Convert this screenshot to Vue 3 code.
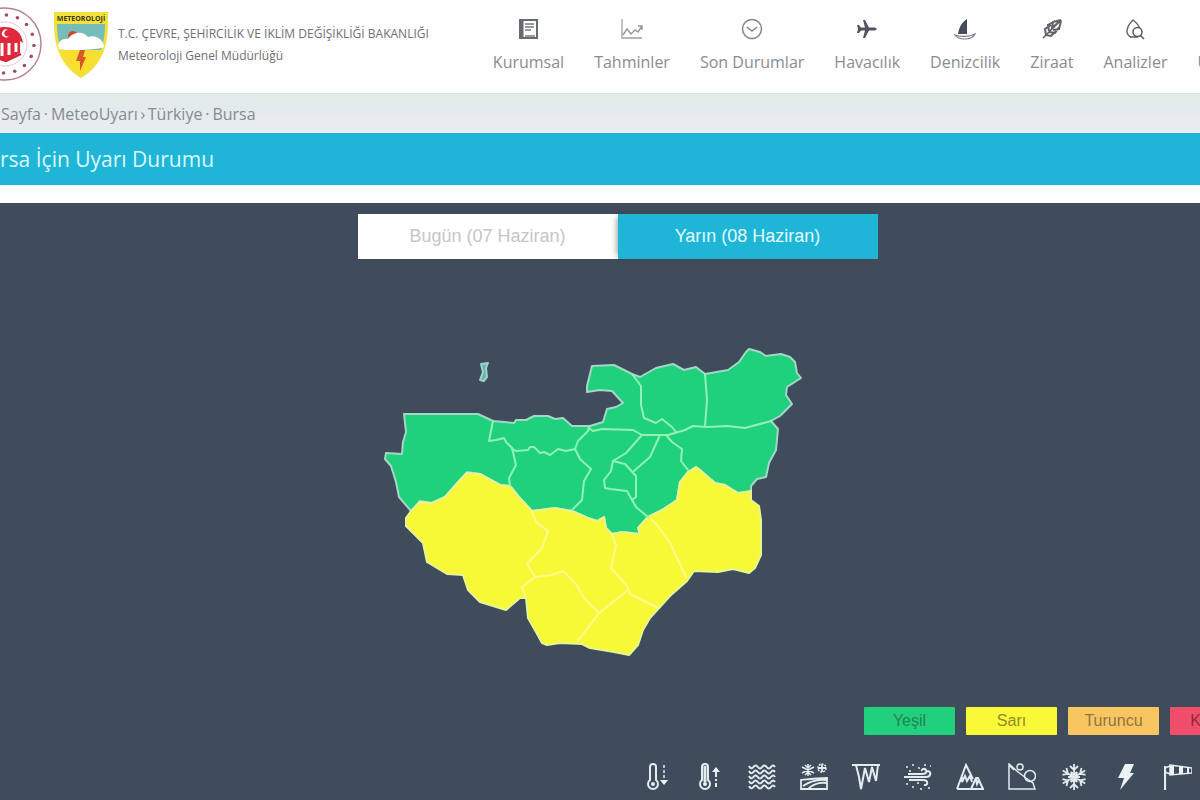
<script setup>
import { ref } from 'vue'

const menu = ['Kurumsal', 'Tahminler', 'Son Durumlar', 'Havacılık', 'Denizcilik', 'Ziraat', 'Analizler', 'Uydu']
const crumbs = [
  { label: 'Sayfa', sep: '·' },
  { label: 'MeteoUyarı', sep: '›' },
  { label: 'Türkiye', sep: '·' },
  { label: 'Bursa', sep: '' }
]
const days = ['Bugün (07 Haziran)', 'Yarın (08 Haziran)']
const selected = ref(1)
const levels = [
  { name: 'Yeşil', tone: 'green' },
  { name: 'Sarı', tone: 'yellow' },
  { name: 'Turuncu', tone: 'orange' },
  { name: 'Kırmızı', tone: 'red' }
]
const ringDots = Array.from({ length: 16 }, (_, i) => {
  const a = (i * Math.PI) / 8 + 0.05
  return { x: 5 + 29 * Math.cos(a), y: 37 + 29 * Math.sin(a) }
})
</script>

<template>
  <div class="page">
    <header class="top">
      <a class="brand" href="#">
        <svg class="emblem" viewBox="0 0 42 74" aria-hidden="true">
          <circle cx="5" cy="37" r="36" fill="#fff" stroke="#b57f8c" stroke-width="1.4" />
          <circle cx="5" cy="37" r="22" fill="#fff" stroke="#eec4ca" stroke-width="1" />
          <circle v-for="(d, i) in ringDots" :key="i" :cx="d.x" :cy="d.y" r="1.8" fill="#9a5263" />
          <path d="M-14 37C-12 25-5 20 5 20s17 6 18 16l-3-2v12L6 54l-14-6z" fill="#e02a3c" />
          <path d="M-5 37v11M2 36v13M9 36v12M16 36v9" stroke="#fff" stroke-width="3" />
          <path d="M-8 49l14 5 15-7" fill="none" stroke="#d12639" stroke-width="2.4" />
          <path d="M8 23a4 4 0 1 0 1 6 3.2 3.2 0 1 1-1-6z" fill="#fff" />
        </svg>
        <svg class="shield" viewBox="0 0 54 66" aria-hidden="true">
          <path d="M0 0h54v12c0 24-8 43-27 54C8 55 0 36 0 12z" fill="#f2e13a" />
          <path d="M3 12h48c0 9-1 18-4 26H7C4 30 3 21 3 12z" fill="#76bdb9" />
          <circle cx="19" cy="24" r="5" fill="#cb4a32" />
          <path d="M5 37c-3-6 3-11 9-10 4-7 15-9 20-2 8-3 16 3 16 10-3 3-42 4-45 2z" fill="#fff" />
          <path d="M8 38h38c-4 11-10 19-19 25C18 57 12 49 8 38z" fill="#f8de30" />
          <path d="M26 38h5l-2 7h3l-6 14v-10h-4z" fill="#d8572b" />
          <text x="27" y="9" text-anchor="middle">METEOROLOJİ</text>
        </svg>
        <span class="names">
          <span>T.C. ÇEVRE, ŞEHİRCİLİK VE İKLİM DEĞİŞİKLİĞİ BAKANLIĞI</span>
          <span>Meteoroloji Genel Müdürlüğü</span>
        </span>
      </a>
      <nav class="menu" aria-label="Ana menü">
        <a v-for="(m, i) in menu" :key="m" href="#">
          <svg viewBox="0 0 22 22" aria-hidden="true">
            <template v-if="i === 0">
              <path d="M3 2h17v18H3z" fill="none" stroke="#666b70" stroke-width="2" />
              <path d="M5 2v18" stroke="#666b70" stroke-width="3" />
              <path d="M8 6h9M8 9h9M8 12h6M8 18h10" stroke="#777b80" stroke-width="1.3" />
            </template>
            <template v-else-if="i === 1">
              <path d="M1 1v19h20" fill="none" stroke="#a0a0a2" stroke-width="1.3" />
              <path d="M2 17l4-6 4 5 4-4 3 2 4-6M17 8h4v4" fill="none" stroke="#98989b" stroke-width="1.4" />
            </template>
            <template v-else-if="i === 2">
              <circle cx="11" cy="11" r="9.5" fill="none" stroke="#85858a" stroke-width="1.5" />
              <path d="M6 9l5 4 5-4" fill="none" stroke="#85858a" stroke-width="1.5" />
            </template>
            <path v-else-if="i === 3" d="M21 11l-2-1.500h-6L9 2H7l2 7.500H5L3 7H1l1 4-1 4h2l2-2.500h4L7 20h2l4-7.500h6z" fill="#50555f" />
            <template v-else-if="i === 4">
              <path d="M13 1v15H4C5 9 8 4 13 1z" fill="#454b5a" />
              <path d="M1 17c5 2 14 2 20-1-2 4-5 5-10 5-5 0-8-1-10-4z" fill="#fff" stroke="#777b84" stroke-width="1.200" />
            </template>
            <template v-else-if="i === 5">
              <path d="M2 20L20 2" stroke="#55585e" stroke-width="1.400" />
              <path d="M20 2l-8 2-1 6zM14 3L7 7l1 6M10 7l-6 4 1 6M20 3l-2 8-6 1M18 9l-4 6-6-1M14 14l-4 4-5-1" fill="none" stroke="#606369" stroke-width="2" />
            </template>
            <template v-else-if="i === 6">
              <path d="M7 19c-7-3-4-11 2-17 4 3 6 6 7 9" fill="none" stroke="#666a70" stroke-width="1.500" />
              <circle cx="13.500" cy="14" r="4.500" fill="#fff" stroke="#55595f" stroke-width="1.500" />
              <path d="M16 17l4 4M6 19h8" stroke="#55595f" stroke-width="1.500" />
            </template>
          </svg>
          <span>{{ m }}</span>
        </a>
      </nav>
    </header>

    <nav class="crumbs" aria-label="Konum">
      <template v-for="c in crumbs" :key="c.label">
        <a href="#">{{ c.label }}</a>
        <span v-if="c.sep" class="sep">{{ c.sep }}</span>
      </template>
    </nav>

    <h1>rsa İçin Uyarı Durumu</h1>

    <main class="panel">
      <div class="stage">
        <div class="days">
          <button v-for="(d, i) in days" :key="d" type="button" :class="{ on: selected === i }" @click="selected = i">{{ d }}</button>
        </div>
        <svg class="map" viewBox="358 259 520 448" role="img" aria-label="Bursa ilçeleri">
          <g stroke-width="2" stroke-linejoin="round" stroke-linecap="round">
            <path fill="#1fd17c" stroke="#a5d6c8" d="M404 414L478 414 493 421 514 423 516 420 526 420 534 416 548 416 555 419 563 418 572 426 590 426 603 422 607 409 616 407 623 403 612 391 600 390 587 392 587 386 592 366 614 365 632 374 640 377 656 368 673 364 684 370 696 367 705 374 728 370 739 362 746 352 749 349 760 352 766 356 781 354 790 357 795 362 797 373 801 378 787 387 786 395 792 404 780 416 771 421 778 429 776 450 769 463 766 477 757 479 751 486 751 492 738 493 725 485 715 483 700 470 696 467 688 472 680 482 677 500 662 510 648 517 638 528 640 534 622 532 612 534 606 528 604 517 597 521 588 518 572 511 555 508 532 511 519 497 510 486 500 485 480 474 467 472 460 480 445 497 432 503 420 501 411 511 399 497 396 482 391 466 385 459 386 453 402 454 403 442 406 432z" />
            <path fill="#f8f936" stroke="#e6f596" d="M411 511L420 502 432 503 445 497 460 480 467 473 480 474 500 485 510 486 519 497 532 511 555 508 572 511 588 518 597 521 604 517 606 528 612 534 622 532 640 534 638 528 648 517 662 510 677 500 680 482 688 472 696 467 700 470 715 483 725 485 738 493 751 491 751 500 759 506 761 520 761 555 755 568 749 573 733 569 718 572 694 571 687 581 670 596 650 618 643 630 638 645 629 655 614 652 590 648 582 644 560 643 547 645 542 643 536 632 528 618 526 598 520 598 506 610 480 602 468 590 463 575 447 574 427 562 423 543 406 526 406 518z" />
            <g fill="none" stroke="#92f2b2">
              <path d="M493 421L489 441 496 440 504 438 506 442 512 448 516 465 509 478 510 486" />
              <path d="M512 449L516 451 528 450 530 447 534 447 540 453 544 452 550 455 558 449 566 451 575 449 578 441 588 431 589 426" />
              <path d="M575 449L580 459 591 469 584 481 582 500 572 510" />
              <path d="M589 428L593 431 602 429 633 430 642 435 668 435 685 430 693 426 707 427 728 426 745 428 771 421" />
              <path d="M632 374L641 386 641 405 644 418 656 423 662 419 672 427 676 432" />
              <path d="M705 374L707 400 705 426" />
              <path d="M642 435L626 453 613 461 611 471 604 480 605 488 610 489 627 491 636 507 648 517" />
              <path d="M613 461L625 464 636 476 636 497 632 500M660 435L650 457 634 471M666 435L672 442 682 449 681 461 688 470" />
            </g>
            <g fill="none" stroke="#fbfb8b">
              <path d="M532 511L536 522 548 531 542 548 527 564 535 577 522 587 526 598" />
              <path d="M535 577L552 575 563 571 576 584 584 598 599 613" />
              <path d="M612 534L616 545 611 568 627 586 630 594 658 608M627 591L599 613 578 641M651 519L657 525 670 543 686 577" />
            </g>
            <path d="M481 364l7-1-2 5 1 9-3 4-4-1 3-8z" fill="#65b7a5" stroke="#a2cfd0" />
          </g>
        </svg>
      </div>

      <ul class="levels">
        <li v-for="l in levels" :key="l.name" :class="l.tone">{{ l.name }}</li>
      </ul>

      <ul class="hazards">
        <li><svg viewBox="0 0 28 28" aria-hidden="true"><path d="M6 17V4a3 3 0 0 1 6 0v13a5 5 0 1 1-6 0z" stroke-width="2" /><circle cx="9" cy="21" r="2" class="solid" /><path d="M20 2v15" stroke-dasharray="3 2" /><path d="M16 17h8l-4 5z" class="solid" /></svg></li>
        <li><svg viewBox="0 0 28 28" aria-hidden="true"><path d="M6 17V4a3 3 0 0 1 6 0v13a5 5 0 1 1-6 0z" stroke-width="2" /><circle cx="9" cy="21" r="2" class="solid" /><path d="M9 3v16" stroke-width="3" /><path d="M20 8v16" stroke-dasharray="6 2 2 2" stroke-width="2" /><path d="M16 9l4-5 4 5z" class="solid" /></svg></li>
        <li><svg viewBox="0 0 28 28" aria-hidden="true"><path v-for="y in [3, 8, 13, 18, 23]" :key="y" :d="`M1 ${y}q2.200 4 4.400 1t4.400 0 4.400 0 4.400 0 4.400 0 4 0`" stroke-width="2" /></svg></li>
        <li><svg viewBox="0 0 28 28" aria-hidden="true"><path d="M8 1v12M2 4l12 6M2 10l12-6M5 2l3 3 3-3M5 12l3-3 3 3" /><circle cx="22" cy="5" r="4" stroke-dasharray="2 1" /><path d="M18 5h8M22 1v8M1 26V17c9-1 17-2 26-2v11zM3 23c7-5 14-7 24-6M8 26c5-5 11-7 19-6" stroke-width="1.800" /></svg></li>
        <li><svg viewBox="0 0 28 28" aria-hidden="true"><path d="M0 2h28M4 2l3 12 2 12 4-21 4 14 3-15 4 14 2-16" stroke-width="2" /></svg></li>
        <li><svg viewBox="0 0 28 28" aria-hidden="true"><path d="M4 11h14c4 0 5-2 4-4s-5-1-4 1M0 14h22c5 0 6-6 1-6M5 17h14c6 0 5 6 1 5" stroke-width="2" /><path d="M2 4h2M8 2h2M14 5h2M20 2h2M26 3h1M5 8h2M2 21h2M8 24h2M13 20h2M16 26h2M24 25h2" /></svg></li>
        <li><svg viewBox="0 0 28 28" aria-hidden="true"><path d="M1 26L10 2l7 14M1 26h26l-5-11h-2l-5 11M6 14v5l3-6 2 5 3-5 2 6M20 16l1 5 2-4" stroke-width="2" /></svg></li>
        <li><svg viewBox="0 0 28 28" aria-hidden="true"><path d="M1 1v25h26l-2-6-7-5-8-6zM1 2l5 5" /><circle cx="12" cy="4" r="3" /><circle cx="22" cy="13" r="5.500" /></svg></li>
        <li><svg viewBox="0 0 28 28" aria-hidden="true"><path v-for="a in [0, 60, 120, 180, 240, 300]" :key="a" :transform="`rotate(${a} 14 14)`" d="M14 14V1M10 3l4 4 4-4M11 9l3 3 3-3" stroke-width="1.800" /></svg></li>
        <li><svg viewBox="0 0 28 28" aria-hidden="true"><path d="M13 1h9l-4 9h4L8 27l4-12H6z" class="solid" /></svg></li>
        <li><svg viewBox="0 0 28 28" aria-hidden="true"><path d="M1 3v24" stroke-width="2.200" /><path d="M1 5l5-2M1 9l5 2M6 2l22 3v5L6 12z" /><path d="M6 3h4v9H6zM15 3h4v8h-4zM23 4h2v6h-2z" class="solid" /></svg></li>
      </ul>
    </main>
  </div>
</template>

<style>
body {
  margin: 0;
  background: #3f4c5b;
}
</style>

<style scoped>
.page {
  display: flex;
  flex-direction: column;
  min-height: 100vh;
  overflow: hidden;
  background: #fdfefe;
  font-family: "Open Sans", "Noto Sans", sans-serif;
}
a {
  color: inherit;
  text-decoration: none;
}
.top {
  display: flex;
  gap: 64px;
  height: 93px;
  background: #fefefe;
}
.brand {
  display: flex;
  flex: none;
  padding-top: 7px;
}
.emblem {
  width: 42px;
  height: 74px;
}
.shield {
  width: 54px;
  height: 66px;
  margin: 5px 10px 0 12px;
}
.shield text {
  font: 700 7px "Open Sans", sans-serif;
  fill: #3b3a1e;
}
.names {
  display: flex;
  flex-direction: column;
  padding-top: 16px;
  color: #6f7073;
  font-size: 12px;
  line-height: 22px;
  white-space: nowrap;
}
.menu {
  display: flex;
  gap: 30px;
  padding-top: 18px;
  color: #8b8c8e;
  font-size: 16px;
  line-height: 22px;
  white-space: nowrap;
}
.menu a {
  display: flex;
  flex-direction: column;
  align-items: center;
  gap: 11px;
}
.menu svg {
  width: 22px;
  height: 22px;
}
.crumbs {
  display: flex;
  align-items: center;
  height: 39px;
  border-top: 1px solid #d9e6e2;
  background: linear-gradient(#e2e9e9, #e8edf2);
  color: #858b8e;
  font-size: 16px;
  line-height: 24px;
}
.crumbs a {
  margin: 0 1px;
}
.sep {
  width: 8px;
  text-align: center;
}
h1 {
  margin: 0 0 18px;
  background: #1fb5d6;
  color: #dcfaff;
  font-size: 21px;
  font-weight: 400;
  line-height: 52px;
}
.panel {
  flex: 1;
  overflow: hidden;
  background: #3f4c5b;
}
.stage {
  display: flex;
  flex-direction: column;
  align-items: center;
  padding: 11px 0 0 35px;
}
.days {
  display: grid;
  grid-template-columns: 1fr 1fr;
  width: 520px;
}
.days button {
  height: 45px;
  border: 0;
  background: #fff;
  color: #c5c6c8;
  font: 18px "Liberation Sans", Arial, sans-serif;
}
.days .on {
  background: #1fb5d6;
  box-shadow: -4px 0 6px -3px rgba(0, 0, 0, 0.4);
  color: #e2fbff;
}
.map {
  display: block;
  width: 520px;
  height: 448px;
}
ul {
  display: flex;
  justify-content: flex-end;
  margin: 0;
  padding: 0;
  list-style: none;
}
.levels {
  gap: 11px;
  margin-right: -61px;
}
.levels li {
  width: 91px;
  border-radius: 1px;
  font: 16px/28px "Liberation Sans", Arial, sans-serif;
  text-align: center;
}
.green {
  background: #21d07c;
  color: #218453;
}
.yellow {
  background: #faf937;
  color: #8d8c2d;
}
.orange {
  background: #f8c561;
  color: #8f7545;
}
.red {
  background: #f04e6b;
  color: #8e2d40;
}
.hazards {
  gap: 24px;
  padding: 28px 8px 9px 0;
}
.hazards svg {
  display: block;
  width: 28px;
  height: 28px;
  fill: none;
  stroke: #e3ebef;
  stroke-width: 1.5;
}
.hazards .solid {
  fill: #edf3f5;
  stroke: none;
}
</style>
